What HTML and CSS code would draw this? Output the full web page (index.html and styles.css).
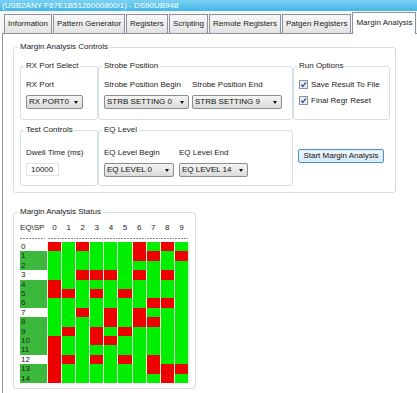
FILE: index.html
```html
<!DOCTYPE html>
<html>
  <head>
    <meta charset="utf-8" />
    <title>DS90UB948 - Margin Analysis</title>
    <link rel="stylesheet" href="styles.css">
  </head>
  <body>
    <div class="titlebar">(USB2ANY F67E1B5126000800/1) - DS90UB948</div>
    <div class="tabs">
      <span class="tab">Information</span>
      <span class="tab">Pattern Generator</span>
      <span class="tab">Registers</span>
      <span class="tab">Scripting</span>
      <span class="tab">Remote Registers</span>
      <span class="tab">Patgen Registers</span>
      <span class="tab active">Margin Analysis</span>
    </div>
    <div class="page">
      <fieldset class="group controls">
        <legend>Margin Analysis Controls</legend>
        <div class="controls-grid">
          <fieldset class="group sub top">
            <legend>RX Port Select</legend>
            <div class="field">
              <label>RX Port</label>
              <div class="combo rx">RX PORT0</div>
            </div>
          </fieldset>
          <fieldset class="group sub top">
            <legend>Strobe Position</legend>
            <div class="fields">
              <div class="field">
                <label>Strobe Position Begin</label>
                <div class="combo strb0">STRB SETTING 0</div>
              </div>
              <div class="field">
                <label>Strobe Position End</label>
                <div class="combo strb9">STRB SETTING 9</div>
              </div>
            </div>
          </fieldset>
          <fieldset class="group sub run">
            <legend>Run Options</legend>
            <div class="check">
              <svg width="9" height="9" viewBox="0 0 9 9"><rect x=".5" y=".5" width="8" height="8" fill="#e6edf5" stroke="#8e9196"/><path d="M2.2 4.6 L3.8 6.4 L6.9 2.3" fill="none" stroke="#34508a" stroke-width="1.3"/></svg>
              Save Result To File
            </div>
            <div class="check">
              <svg width="9" height="9" viewBox="0 0 9 9"><rect x=".5" y=".5" width="8" height="8" fill="#e6edf5" stroke="#8e9196"/><path d="M2.2 4.6 L3.8 6.4 L6.9 2.3" fill="none" stroke="#34508a" stroke-width="1.3"/></svg>
              Final Regr Reset
            </div>
          </fieldset>
          <fieldset class="group sub bottom">
            <legend>Test Controls</legend>
            <div class="field">
              <label>Dwell Time (ms)</label>
              <div class="textbox">10000</div>
            </div>
          </fieldset>
          <fieldset class="group sub bottom eq">
            <legend>EQ Level</legend>
            <div class="fields">
              <div class="field">
                <label>EQ Level Begin</label>
                <div class="combo eq0">EQ LEVEL 0</div>
              </div>
              <div class="field">
                <label>EQ Level End</label>
                <div class="combo eq14">EQ LEVEL 14</div>
              </div>
            </div>
          </fieldset>
          <button class="start">Start Margin Analysis</button>
        </div>
      </fieldset>

      <fieldset class="group status">
        <legend>Margin Analysis Status</legend>
        <div class="map head">
          <span>EQ\SP</span><span>0</span><span>1</span><span>2</span><span>3</span><span>4</span><span>5</span><span>6</span><span>7</span><span>8</span><span>9</span>
        </div>
        <div class="map grid">
          <b class="w">0</b><i class="x"></i><i></i><i class="x"></i><i></i><i></i><i></i><i class="x"></i><i></i><i class="x"></i><i></i>
          <b>1</b><i></i><i></i><i></i><i></i><i></i><i></i><i class="x"></i><i class="x"></i><i></i><i class="x"></i>
          <b>2</b><i></i><i></i><i></i><i></i><i></i><i></i><i></i><i></i><i></i><i></i>
          <b class="w">3</b><i></i><i></i><i class="x"></i><i class="x"></i><i class="x"></i><i></i><i class="x"></i><i></i><i class="x"></i><i></i>
          <b>4</b><i class="x"></i><i></i><i></i><i></i><i></i><i></i><i></i><i></i><i></i><i></i>
          <b>5</b><i class="x"></i><i class="x"></i><i></i><i class="x"></i><i></i><i class="x"></i><i></i><i></i><i></i><i></i>
          <b>6</b><i></i><i></i><i></i><i></i><i></i><i></i><i></i><i class="x"></i><i class="x"></i><i></i>
          <b class="w">7</b><i></i><i></i><i class="x"></i><i></i><i class="x"></i><i></i><i class="x"></i><i></i><i></i><i></i>
          <b>8</b><i></i><i></i><i></i><i></i><i class="x"></i><i></i><i class="x"></i><i class="x"></i><i></i><i></i>
          <b>9</b><i></i><i class="x"></i><i></i><i class="x"></i><i></i><i class="x"></i><i></i><i></i><i></i><i></i>
          <b>10</b><i class="x"></i><i></i><i></i><i class="x"></i><i class="x"></i><i></i><i></i><i></i><i></i><i></i>
          <b>11</b><i class="x"></i><i></i><i></i><i></i><i></i><i></i><i></i><i></i><i></i><i></i>
          <b class="w">12</b><i class="x"></i><i class="x"></i><i></i><i class="x"></i><i></i><i class="x"></i><i></i><i class="x"></i><i></i><i></i>
          <b>13</b><i class="x"></i><i></i><i></i><i></i><i></i><i></i><i></i><i class="x"></i><i class="x"></i><i class="x"></i>
          <b>14</b><i class="x"></i><i></i><i></i><i></i><i></i><i></i><i></i><i></i><i class="x"></i><i></i>
        </div>
      </fieldset>
    </div>
  </body>
</html>
```

FILE: styles.css
```css
body {
  margin: 0;
  font-family: "Liberation Sans", Arial, sans-serif;
  font-size: 8px;
  color: #222;
  background: #fff;
}
.titlebar {
  height: 11px;
  overflow: hidden;
  padding-left: 2px;
  line-height: 11px;
  white-space: nowrap;
  color: #fff;
  background: linear-gradient(#7ad2f3, #45b6e6);
}
.tabs {
  display: flex;
  align-items: flex-end;
  height: 22px;
  padding-left: 4px;
  background: #f7f7f7;
}
.tab {
  height: 18px;
  line-height: 18px;
  padding: 0 3px;
  margin-right: 1px;
  border: 1px solid #8e9199;
  border-bottom: 0;
  white-space: nowrap;
  background: linear-gradient(#f8f8f8, #e3e3e3);
}
.tab.active {
  position: relative;
  z-index: 1;
  height: 21px;
  line-height: 19px;
  margin-right: 0;
  margin-bottom: -1px;
  background: #fff;
}
.page {
  box-sizing: border-box;
  height: 360px;
  margin-left: 2px;
  padding: 8px 0 0 10px;
  border-left: 1px solid #8e9199;
  border-top: 1px solid #8e9199;
}

/* group boxes */
.group {
  margin: 0;
  padding: 0;
  min-width: 0;
  border: 1px solid #d5dfe5;
  border-radius: 3px;
}
.group legend {
  padding: 0 2px;
  margin-left: -2px;
  line-height: 10px;
}
.controls {
  box-sizing: border-box;
  width: 383px;
  padding: 9px 5px 6px 6px;
}
.controls-grid {
  display: grid;
  grid-template-columns: 78px 195px 97px;
  grid-template-rows: 59px 61px;
  row-gap: 5px;
}
.sub {
  padding: 9px 5px 0 5px;
}
.sub.bottom {
  padding-top: 13px;
}
.sub.run {
  padding: 8px 4px 0 5px;
}
.fields {
  display: flex;
  gap: 3px;
}
.eq .fields {
  gap: 5px;
}
.field label {
  display: block;
  line-height: 10px;
  margin-bottom: 5px;
  white-space: nowrap;
}
.combo {
  position: relative;
  box-sizing: border-box;
  height: 14px;
  padding-left: 2px;
  line-height: 12px;
  white-space: nowrap;
  color: #111;
  border: 1px solid #8a8c90;
  border-radius: 2px;
  background: linear-gradient(#f4f4f4, #e8e8e8 50%, #dadada);
}
.combo::after {
  content: "";
  position: absolute;
  right: 4px;
  top: 5px;
  border-left: 2px solid transparent;
  border-right: 2px solid transparent;
  border-top: 3px solid #111;
}
.combo.rx { width: 57px; }
.combo.strb0 { width: 85px; }
.combo.strb9 { width: 90px; }
.combo.eq0 { width: 70px; }
.combo.eq14 { width: 69px; }
.textbox {
  box-sizing: border-box;
  width: 33px;
  height: 13px;
  padding-left: 4px;
  line-height: 11px;
  border: 1px solid #e2e3ea;
  background: #fff;
}
.check {
  display: flex;
  align-items: center;
  gap: 3px;
  height: 10px;
  margin-bottom: 6px;
  white-space: nowrap;
}
.start {
  align-self: center;
  justify-self: start;
  width: 86px;
  height: 14px;
  margin-left: 5px;
  padding: 0;
  font: inherit;
  line-height: 12px;
  color: #111;
  border: 1px solid #4b93c4;
  border-radius: 2px;
  box-shadow: inset 0 0 0 1px #d8eefb;
  background: linear-gradient(#f2f8fc, #e4f1f9 50%, #d2e8f5);
}

/* status map */
.status {
  box-sizing: border-box;
  width: 183px;
  margin-top: 14px;
  padding: 5px 5px 5px 6px;
}
.map {
  display: grid;
  grid-template-columns: 27px repeat(10, 13.1px);
  column-gap: 1px;
}
.head span {
  line-height: 12px;
  padding-bottom: 5px;
  text-align: center;
  background: repeating-linear-gradient(90deg, #8a8a8a 0 2px, transparent 2px 3px) left bottom / 100% 1px no-repeat;
}
.head span:first-child {
  text-align: left;
  background-size: 25px 1px;
}
.grid {
  grid-template-rows: repeat(15, 1fr);
  height: 141px;
  margin-top: 3px;
  background: #dcf7dc;
}
.grid b {
  padding-left: 1px;
  font-weight: normal;
  line-height: 9.4px;
  color: #1c2a1c;
  background: #3cb83c;
}
.grid b.w {
  color: #222;
  background: #fff;
}
.grid i {
  background: #00ee00;
}
.grid i.x {
  background: #ee0000;
}
```
